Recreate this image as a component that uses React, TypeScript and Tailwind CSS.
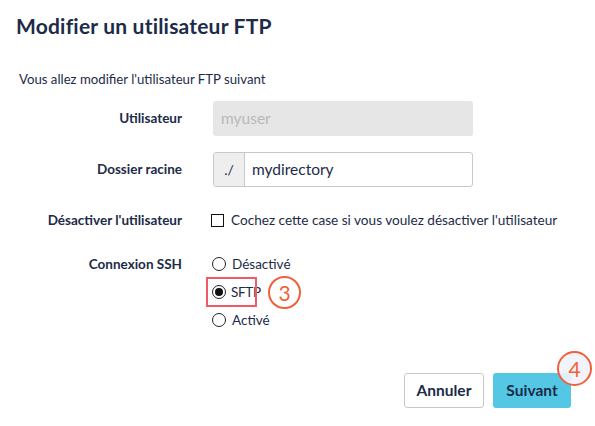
import React from "react";

function Radio({ checked }: { checked?: boolean }) {
  return (
    <span className="w-[14px] h-[14px] rounded-full border border-[#222] bg-white flex items-center justify-center shrink-0">
      {checked && <span className="w-[8px] h-[8px] rounded-full bg-[#111]" />}
    </span>
  );
}

export default function App() {
  return (
    <div
      className="w-[595px] h-[426px] bg-white relative overflow-hidden text-[#1c2b48]"
      style={{ fontFamily: "Lato, 'Open Sans', sans-serif" }}
    >
      <h1 className="pl-[16px] pt-[12px] text-[21px] leading-[28px] font-bold tracking-[0.2px]">
        Modifier un utilisateur FTP
      </h1>
      <p className="pl-[19px] mt-[30px] text-[13.2px] leading-[18px]">
        Vous allez modifier l'utilisateur FTP suivant
      </p>

      <div className="flex items-center mt-[13px] h-[35px]">
        <div className="w-[182px] text-right text-[13.5px] font-bold">Utilisateur</div>
        <div className="ml-[31px] w-[260px] h-[35px] rounded-[3px] bg-[#e6e6e6] flex items-center pl-[8px] text-[15.5px] text-[#b9b9b9]">
          myuser
        </div>
      </div>

      <div className="flex items-center mt-[16px] h-[35px]">
        <div className="w-[182px] text-right text-[13.5px] font-bold">Dossier racine</div>
        <div className="ml-[31px] w-[260px] h-[35px] rounded-[3px] border border-[#c8c8c8] flex overflow-hidden">
          <div className="w-[31px] bg-[#eeeeee] border-r border-[#c8c8c8] flex items-center justify-center text-[14px]">
            ./
          </div>
          <div className="flex items-center pl-[7px] text-[15.5px]">mydirectory</div>
        </div>
      </div>

      <div className="flex items-center mt-[23px] h-[20px]">
        <div className="w-[182px] text-right text-[13.5px] font-bold">Désactiver l'utilisateur</div>
        <div className="ml-[29px] flex items-center gap-[7px] text-[13.6px]">
          <span className="w-[13px] h-[13px] border border-[#111] bg-white" />
          <span>Cochez cette case si vous voulez désactiver l'utilisateur</span>
        </div>
      </div>

      <div className="flex mt-[20px]">
        <div className="w-[182px] text-right text-[13.5px] font-bold leading-[20px] pt-[4px]">Connexion SSH</div>
        <div className="ml-[30px] flex flex-col text-[13.5px]">
          <div className="h-[28px] flex items-center gap-[6px]">
            <Radio />
            <span>Désactivé</span>
          </div>
          <div className="h-[28px] flex items-center gap-[5px] relative">
            <Radio checked />
            <span className="tracking-[-0.3px]">SFTP</span>
            <span className="absolute left-[-6px] top-[-1px] w-[51px] h-[30px] border-2 border-[#ef5b66]" />
            <span className="absolute left-[56px] top-[-2px] w-[33px] h-[33px] rounded-full border-2 border-[#f25f3a] bg-white flex items-center justify-center text-[21px] leading-none text-[#f25f3a]">
              3
            </span>
          </div>
          <div className="h-[28px] flex items-center gap-[6px]">
            <Radio />
            <span>Activé</span>
          </div>
        </div>
      </div>

      <div className="flex justify-end gap-[9px] pr-[24px] mt-[39px]">
        <button className="w-[80px] h-[35px] rounded-[3px] border border-[#c8c8c8] bg-white text-[15.5px] font-bold text-[#1c2b48]">
          Annuler
        </button>
        <div className="relative">
          <button className="w-[78px] h-[35px] rounded-[3px] bg-[#54c7e5] text-[15.5px] font-bold text-[#1c2b48]">
            Suivant
          </button>
          <span className="absolute left-[64px] top-[-22px] w-[35px] h-[35px] rounded-full border-2 border-[#f25f3a] bg-[#f1f3fb]/90 flex items-center justify-center text-[21px] leading-none text-[#f25f3a]">
            4
          </span>
        </div>
      </div>
    </div>
  );
}
